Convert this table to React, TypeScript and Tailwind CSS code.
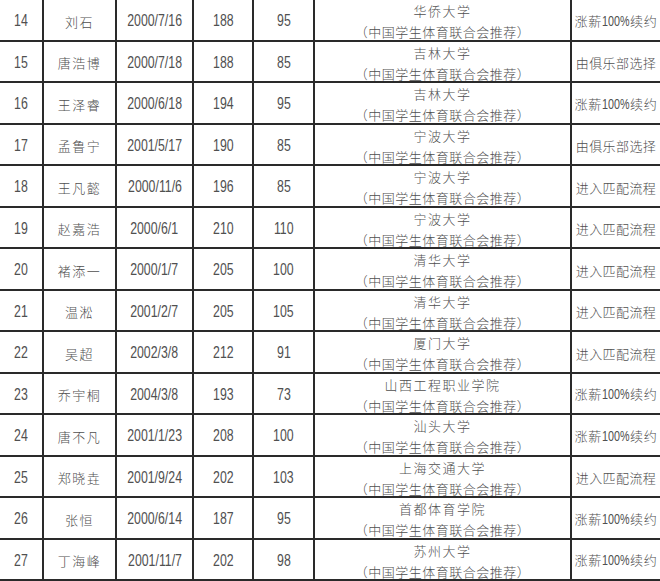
import React from "react";

type Row = {
  no: number;
  name: string;
  birth: string;
  height: number;
  weight: number;
  school: string;
  result: string;
};

const rows: Row[] = [
  { no: 14, name: "刘石", birth: "2000/7/16", height: 188, weight: 95, school: "华侨大学", result: "涨薪100%续约" },
  { no: 15, name: "唐浩博", birth: "2000/7/18", height: 188, weight: 85, school: "吉林大学", result: "由俱乐部选择" },
  { no: 16, name: "王泽睿", birth: "2000/6/18", height: 194, weight: 95, school: "吉林大学", result: "涨薪100%续约" },
  { no: 17, name: "孟鲁宁", birth: "2001/5/17", height: 190, weight: 85, school: "宁波大学", result: "由俱乐部选择" },
  { no: 18, name: "王凡懿", birth: "2000/11/6", height: 196, weight: 85, school: "宁波大学", result: "进入匹配流程" },
  { no: 19, name: "赵嘉浩", birth: "2000/6/1", height: 210, weight: 110, school: "宁波大学", result: "进入匹配流程" },
  { no: 20, name: "褚添一", birth: "2000/1/7", height: 205, weight: 100, school: "清华大学", result: "进入匹配流程" },
  { no: 21, name: "温淞", birth: "2001/2/7", height: 205, weight: 105, school: "清华大学", result: "进入匹配流程" },
  { no: 22, name: "吴超", birth: "2002/3/8", height: 212, weight: 91, school: "厦门大学", result: "进入匹配流程" },
  { no: 23, name: "乔宇桐", birth: "2004/3/8", height: 193, weight: 73, school: "山西工程职业学院", result: "涨薪100%续约" },
  { no: 24, name: "唐不凡", birth: "2001/1/23", height: 208, weight: 100, school: "汕头大学", result: "涨薪100%续约" },
  { no: 25, name: "郑晓垚", birth: "2001/9/24", height: 202, weight: 103, school: "上海交通大学", result: "进入匹配流程" },
  { no: 26, name: "张恒", birth: "2000/6/14", height: 187, weight: 95, school: "首都体育学院", result: "涨薪100%续约" },
  { no: 27, name: "丁海峰", birth: "2001/11/7", height: 202, weight: 98, school: "苏州大学", result: "涨薪100%续约" },
];

const cell = "flex items-center justify-center pt-[3px] border-r-2 border-[#2a2a2a]";
const cjk = "font-['Noto_Sans_CJK_SC',sans-serif] text-[13px] font-light";

// the source uses a narrow sans for figures; squeeze Liberation Sans to match
const Narrow = ({ children, className = "" }: { children: React.ReactNode; className?: string }) => (
  <span
    className={`inline-block whitespace-nowrap font-['Liberation_Sans',sans-serif] scale-x-[0.77] ${className}`}
  >
    {children}
  </span>
);

const Result = ({ text }: { text: string }) => {
  if (text.includes("100%")) {
    const [a, b] = text.split("100%");
    return (
      <span className="whitespace-nowrap">
        <span className="tracking-[0.8px]">{a}</span>
        <Narrow className="text-[14px] -mx-[4px]">100%</Narrow>
        <span className="tracking-[0.8px]">{b}</span>
      </span>
    );
  }
  return <span className="whitespace-nowrap tracking-[0.4px]">{text}</span>;
};

export default function App() {
  return (
    <div className="w-[660px] h-[581px] bg-white overflow-hidden text-[#505050]">
      {rows.map((r) => (
        <div key={r.no} className="flex h-[41.5px] border-b-2 border-[#2a2a2a]">
          <div className={`${cell} w-[44px]`}>
            <Narrow className="text-[16px]">{r.no}</Narrow>
          </div>
          <div className={`${cell} ${cjk} w-[73px] tracking-[1.5px]`}>{r.name}</div>
          <div className={`${cell} w-[77px]`}>
            <Narrow className="text-[16px]">{r.birth}</Narrow>
          </div>
          <div className={`${cell} w-[60px]`}>
            <Narrow className="text-[16px]">{r.height}</Narrow>
          </div>
          <div className={`${cell} w-[61px]`}>
            <Narrow className="text-[16px]">{r.weight}</Narrow>
          </div>
          <div className={`${cell} ${cjk} w-[257px] flex-col leading-[21px] tracking-[0.5px]`}>
            <span className="tracking-[1.5px]">{r.school}</span>
            <span>（中国学生体育联合会推荐）</span>
          </div>
          <div className={`flex-1 flex items-center justify-center pt-[3px] ${cjk}`}>
            <Result text={r.result} />
          </div>
        </div>
      ))}
    </div>
  );
}
